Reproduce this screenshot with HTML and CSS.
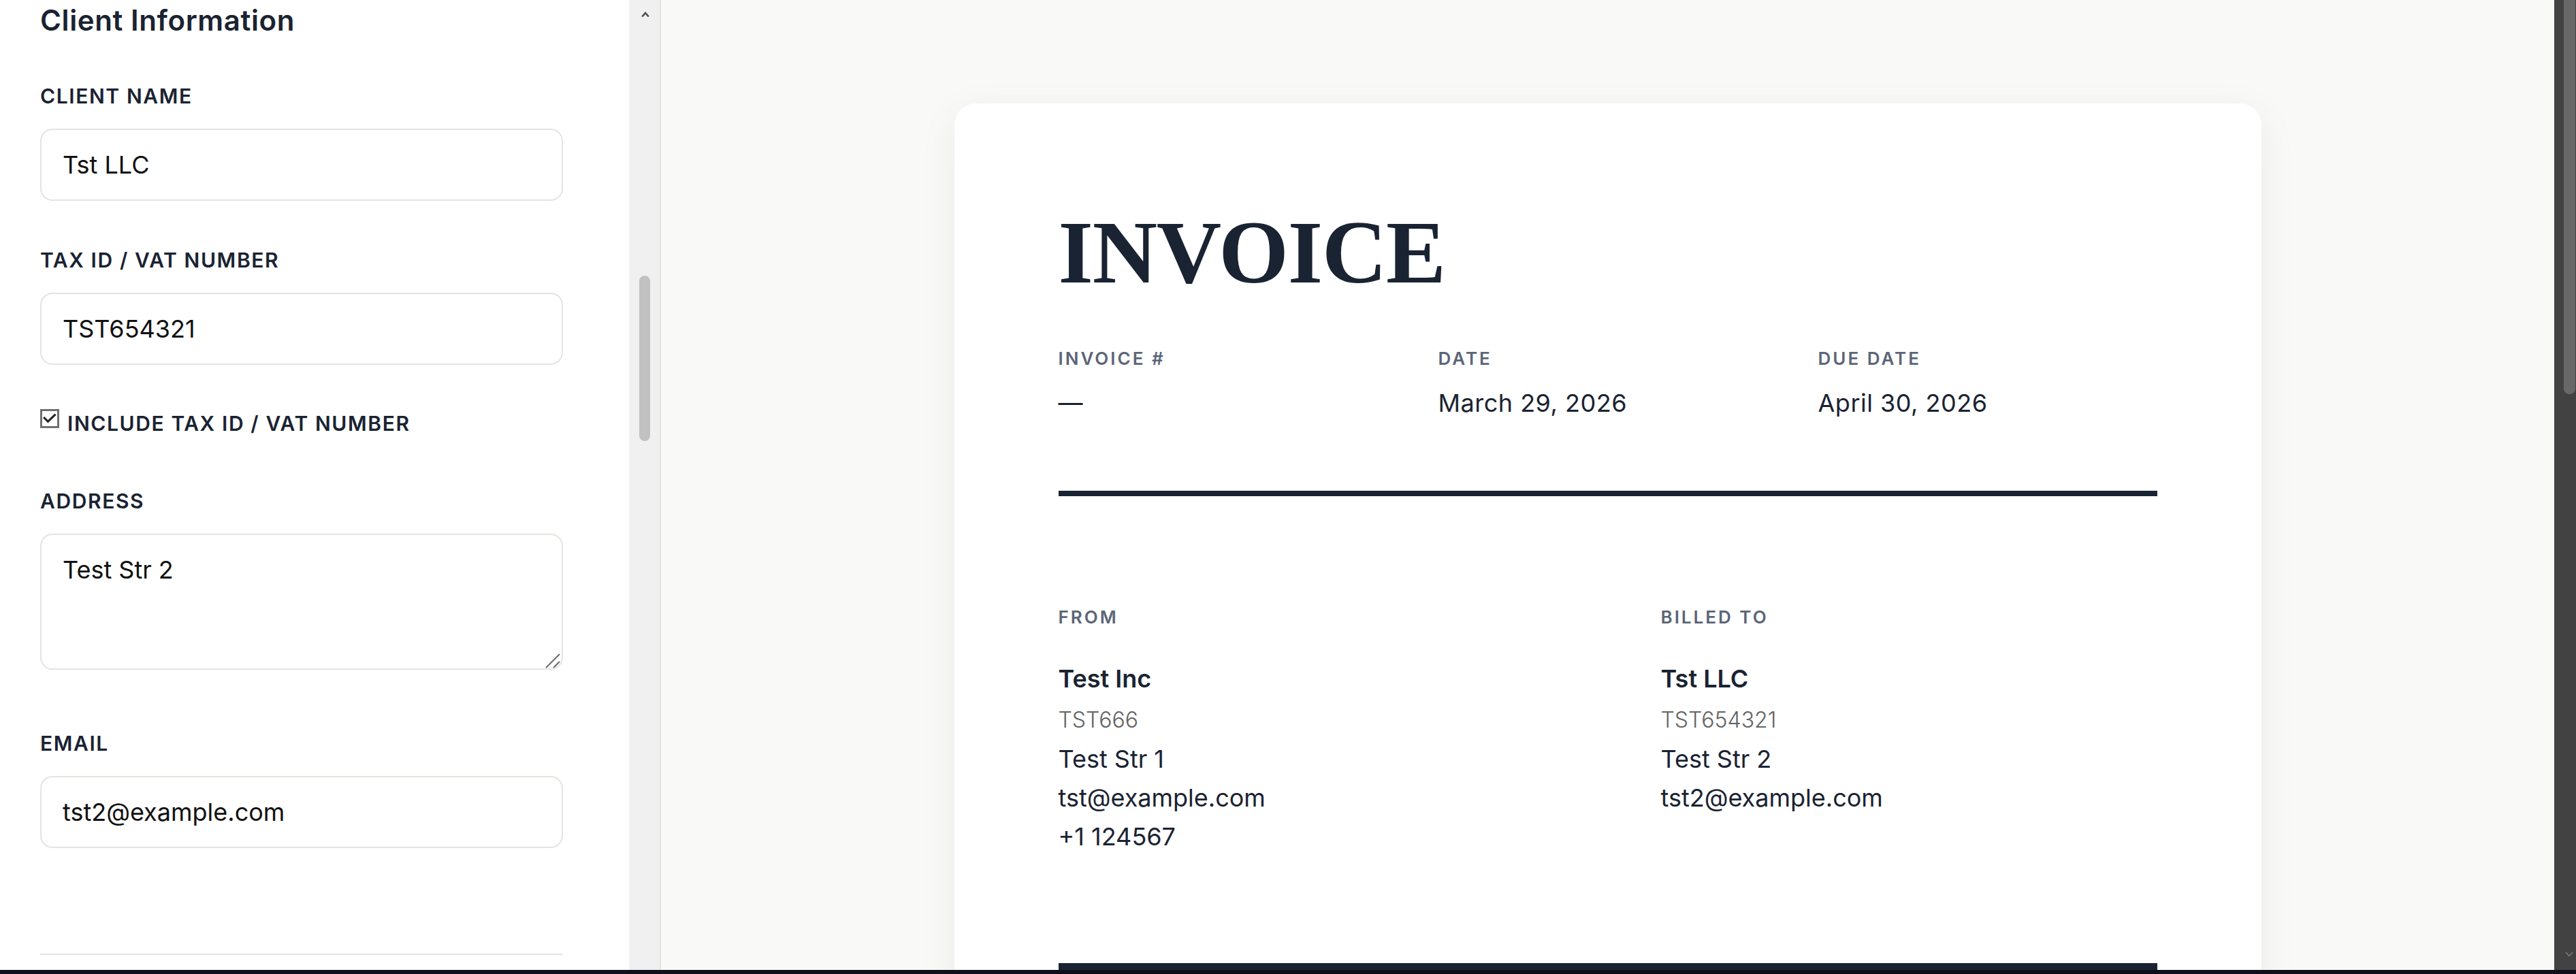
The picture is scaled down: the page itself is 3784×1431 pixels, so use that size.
FILE: index.html
```html
<!DOCTYPE html>
<html lang="en">
<head>
<meta charset="utf-8">
<title>Invoice Editor</title>
<link rel="stylesheet" href="styles.css">
</head>
<body>
<div class="app">
  <aside class="sidebar">
    <div class="sidebar-inner">
      <h2 class="panel-title">Client Information</h2>

      <label class="field-label first">Client Name</label>
      <input class="text-input" type="text" value="Tst LLC">

      <label class="field-label">Tax ID / VAT Number</label>
      <input class="text-input" type="text" value="TST654321">

      <div class="check-row">
        <span class="check-box">
          <svg width="22" height="22" viewBox="0 0 22 22"><path d="M2.2 9 L8.4 15.4 L19.6 4.6" fill="none" stroke="#222" stroke-width="3"/></svg>
        </span>
        <span class="check-label">Include Tax ID / VAT Number</span>
      </div>

      <label class="field-label addr">Address</label>
      <div class="textarea-wrap">
        <textarea class="text-area">Test Str 2</textarea>
        <svg class="grip" width="24" height="24" viewBox="0 0 24 24"><path d="M22 2 L2 22 M22 13 L13 22" stroke="#6a6a6a" stroke-width="2" fill="none"/></svg>
      </div>

      <label class="field-label email">Email</label>
      <input class="text-input" type="text" value="tst2@example.com">

      <div class="section-rule"></div>
    </div>
  </aside>

  <div class="sb-track">
    <svg class="sb-up" width="14" height="10" viewBox="0 0 14 10"><path d="M7 1 L13 8 L10.5 9 L7 5 L3.5 9 L1 8 Z" fill="#505050"/></svg>
    <div class="sb-thumb"></div>
  </div>
  <div class="split"></div>

  <main class="main">
    <section class="card">
      <h1 class="invoice-title">INVOICE</h1>

      <div class="meta">
        <div>
          <div class="meta-label">Invoice #</div>
          <div class="meta-value">—</div>
        </div>
        <div>
          <div class="meta-label">Date</div>
          <div class="meta-value">March 29, 2026</div>
        </div>
        <div>
          <div class="meta-label">Due Date</div>
          <div class="meta-value">April 30, 2026</div>
        </div>
      </div>

      <div class="heavy-rule"></div>

      <div class="parties">
        <div class="party">
          <div class="meta-label">From</div>
          <div class="party-name">Test Inc</div>
          <div class="party-tax">TST666</div>
          <div class="party-line">Test Str 1</div>
          <div class="party-line">tst@example.com</div>
          <div class="party-line">+1 124567</div>
        </div>
        <div class="party">
          <div class="meta-label">Billed To</div>
          <div class="party-name">Tst LLC</div>
          <div class="party-tax">TST654321</div>
          <div class="party-line">Test Str 2</div>
          <div class="party-line">tst2@example.com</div>
        </div>
      </div>

      <div class="items-head"></div>
    </section>
  </main>

  <div class="page-scroll">
    <div class="ps-thumb"></div>
    <svg class="ps-down" width="12" height="9" viewBox="0 0 12 9"><path d="M1 1 L6 6.5 L11 1" fill="none" stroke="#6e6e6e" stroke-width="2"/></svg>
  </div>
</div>
<div class="bottom-strip"></div>
</body>
</html>
```

FILE: styles.css
```css
html, body {
  margin: 0;
  padding: 0;
}

body {
  font-family: Inter, "DejaVu Sans", sans-serif;
  height: 1431px;
  overflow: hidden;
  display: flex;
  flex-direction: column;
  color: #1a2332;
}

.app {
  display: flex;
  height: 1425px;
  flex: none;
}

/* ---------- Sidebar ---------- */
.sidebar {
  width: 924px;
  flex: none;
  background: #ffffff;
  box-sizing: border-box;
  padding: 2px 0 0 59px;
  overflow: hidden;
}

.sidebar-inner {
  width: 768px;
  display: flex;
  flex-direction: column;
}

.panel-title {
  margin: 0;
  font-size: 42px;
  font-weight: 600;
  line-height: 56px;
  letter-spacing: 0.6px;
  color: #1a2332;
}

.field-label {
  display: block;
  font-size: 30px;
  font-weight: 600;
  line-height: 36px;
  letter-spacing: 1.6px;
  text-transform: uppercase;
  color: #1a2332;
  margin-top: 69px;
}

.field-label.first {
  margin-top: 65px;
}

.field-label.addr {
  margin-top: 78px;
}

.field-label.email {
  margin-top: 90px;
}

.text-input {
  display: block;
  width: 768px;
  height: 106px;
  box-sizing: border-box;
  margin: 30px 0 0;
  padding: 0 31px;
  border: 2px solid #e6e4df;
  border-radius: 18px;
  background: #ffffff;
  font-family: Inter, "DejaVu Sans", sans-serif;
  font-size: 36px;
  color: #111111;
  outline: none;
}

.check-row {
  display: flex;
  align-items: flex-start;
  gap: 12px;
  margin-top: 65px;
}

.check-box {
  width: 28px;
  height: 28px;
  box-sizing: border-box;
  border: 3px solid #707070;
  display: flex;
  align-items: center;
  justify-content: center;
  flex: none;
}

.check-label {
  margin-top: 3px;
  font-size: 30px;
  font-weight: 600;
  line-height: 36px;
  letter-spacing: 1.6px;
  text-transform: uppercase;
  color: #1a2332;
}

.textarea-wrap {
  position: relative;
  margin-top: 30px;
  width: 768px;
  height: 200px;
}

.text-area {
  display: block;
  width: 768px;
  height: 200px;
  box-sizing: border-box;
  margin: 0;
  padding: 24px 31px;
  border: 2px solid #e6e4df;
  border-radius: 18px;
  font-family: Inter, "DejaVu Sans", sans-serif;
  font-size: 36px;
  line-height: 54px;
  color: #111111;
  resize: none;
  outline: none;
}

.grip {
  position: absolute;
  right: 3px;
  bottom: 1px;
}

.section-rule {
  margin-top: 155px;
  height: 2px;
  background: #e6e4df;
}

/* ---------- Sidebar scrollbar ---------- */
.sb-track {
  width: 45px;
  flex: none;
  background: #f0f0f0;
  display: flex;
  flex-direction: column;
  align-items: center;
}

.sb-up {
  margin-top: 16px;
  margin-left: 2px;
}

.sb-thumb {
  margin-top: 379px;
  width: 16px;
  height: 243px;
  border-radius: 8px;
  background: #c1c1c1;
  margin-left: 1px;
}

.split {
  width: 2px;
  flex: none;
  background: #e4e3de;
}

/* ---------- Main preview ---------- */
.main {
  flex: 1;
  min-width: 0;
  background: #f9f9f7;
  display: flex;
  justify-content: center;
  align-items: flex-start;
  box-sizing: border-box;
  padding-top: 152px;
  overflow: hidden;
}

.card {
  flex: none;
  width: 1920px;
  height: 1500px;
  box-sizing: border-box;
  padding: 153px 153px 0;
  background: #ffffff;
  border-radius: 32px;
  box-shadow: 0 12px 60px rgba(30, 30, 20, 0.06);
}

.invoice-title {
  margin: 0;
  font-family: "Liberation Serif", "Times New Roman", serif;
  font-weight: 700;
  font-size: 132px;
  line-height: 132px;
  letter-spacing: -1.2px;
  color: #1a2332;
}

.meta {
  margin-top: 74px;
  display: grid;
  grid-template-columns: repeat(3, 1fr);
  column-gap: 60px;
}

.meta-label {
  font-size: 26px;
  font-weight: 600;
  line-height: 32px;
  letter-spacing: 3px;
  text-transform: uppercase;
  color: #5c6577;
}

.meta-value {
  margin-top: 25px;
  font-size: 36px;
  line-height: 48px;
  letter-spacing: 0.5px;
  color: #1a2332;
}

.heavy-rule {
  margin-top: 105px;
  height: 8px;
  background: #1a2332;
}

.parties {
  margin-top: 162px;
  display: grid;
  grid-template-columns: 1fr 1fr;
  column-gap: 156px;
}

.party .meta-label {
  margin-bottom: 45px;
}

.party-name {
  font-size: 36px;
  font-weight: 600;
  line-height: 58px;
  color: #1a2332;
}

.party-tax {
  margin-top: 3px;
  font-size: 32px;
  font-weight: 300;
  line-height: 58px;
  color: #626262;
}

.party-line {
  font-size: 36px;
  line-height: 57px;
  color: #1a2332;
}

.items-head {
  margin-top: 157px;
  height: 80px;
  background: #1a2332;
}

/* ---------- Page scrollbar ---------- */
.page-scroll {
  width: 32px;
  flex: none;
  background: #424242;
  display: flex;
  flex-direction: column;
  align-items: flex-end;
}

.ps-thumb {
  width: 17px;
  height: 579px;
  margin-right: 1px;
  background: #686868;
  border-radius: 0 0 8px 8px;
}

.ps-down {
  margin-top: auto;
  margin-bottom: 18px;
  margin-right: 4px;
}

.bottom-strip {
  height: 6px;
  flex: none;
  background: #0e0f1a;
}
```
